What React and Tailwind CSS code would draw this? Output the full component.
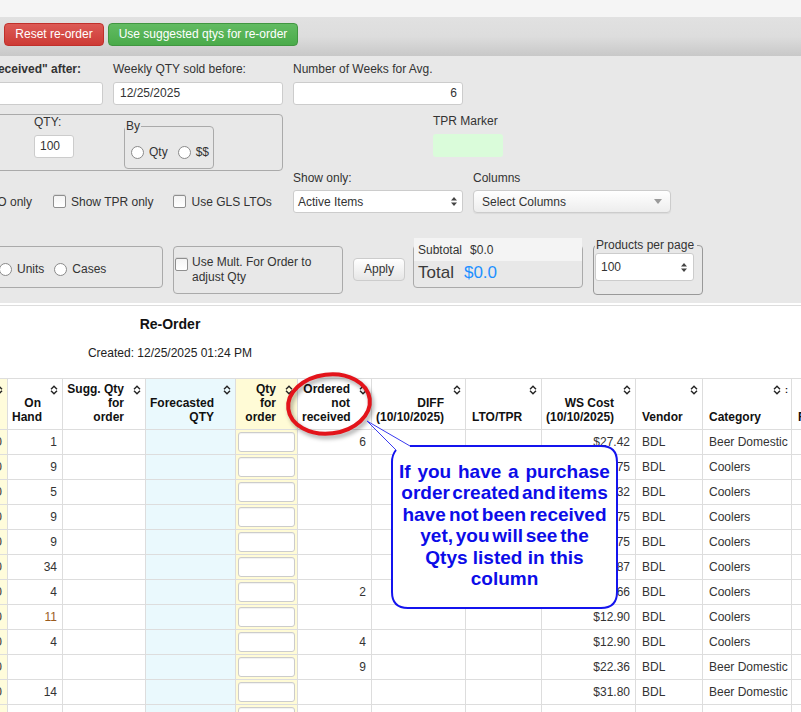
import React from "react";

const Sort = ({ right = 4 }) => (
  <svg
    width="8"
    height="10"
    viewBox="0 0 8 10"
    className={right === 4 ? "absolute right-[4px] top-[6px]" : "absolute right-[10px] top-[6px]"}
  >
    <path d="M1 4.2L4 1.2L7 4.2M1 5.8L4 8.8L7 5.8" fill="none" stroke="#222" strokeWidth="1.4" />
  </svg>
);

const Checkbox = () => (
  <span className="inline-block w-[13px] h-[13px] shrink-0 border border-[#8f8f8f] rounded-[2px] bg-linear-to-b from-[#f4f4f4] to-white shadow-[0_-1px_0_#d6d6d6]" />
);

const Radio = () => (
  <span className="inline-block w-[13px] h-[13px] shrink-0 border border-[#8a8a8a] rounded-full bg-white" />
);

const UpDown = () => (
  <svg width="6" height="9" viewBox="0 0 6 9">
    <path d="M0 3.5L3 0L6 3.5Z M0 5.5L3 9L6 5.5Z" fill="#444" />
  </svg>
);

const cols = [
  { w: "w-[57px]", label: [], align: "right", bg: "bg-[#fffcdb]" },
  { w: "w-[55px]", label: ["On", "Hand"], align: "right", bg: "" },
  { w: "w-[83px]", label: ["Sugg. Qty", "for", "order"], align: "right", bg: "" },
  { w: "w-[90px]", label: ["Forecasted", "QTY"], align: "right", bg: "bg-[#eaf9fd]" },
  { w: "w-[62px]", label: ["Qty", "for", "order"], align: "right", bg: "bg-[#fffbd6]" },
  { w: "w-[74px]", label: ["Ordered", "not", "received"], align: "right", bg: "" },
  { w: "w-[94px]", label: ["DIFF", "(10/10/2025)"], align: "right", bg: "" },
  { w: "w-[76px]", label: ["LTO/TPR"], align: "left", bg: "" },
  { w: "w-[94px]", label: ["WS Cost", "(10/10/2025)"], align: "right", bg: "" },
  { w: "w-[67px]", label: ["Vendor"], align: "left", bg: "" },
  { w: "w-[89px]", label: ["Category"], align: "left", bg: "" },
  { w: "w-[100px]", label: ["Format"], align: "left", bg: "", nosort: true },
];

const rows = [
  { oh: "1", ord: "6", ws: "$27.42", v: "BDL", cat: "Beer Domestic" },
  { oh: "9", ord: "", ws: "$12.75", v: "BDL", cat: "Coolers" },
  { oh: "5", ord: "", ws: "$13.32", v: "BDL", cat: "Coolers" },
  { oh: "9", ord: "", ws: "$12.75", v: "BDL", cat: "Coolers" },
  { oh: "9", ord: "", ws: "$12.75", v: "BDL", cat: "Coolers" },
  { oh: "34", ord: "", ws: "$13.87", v: "BDL", cat: "Coolers" },
  { oh: "4", ord: "2", ws: "$12.66", v: "BDL", cat: "Coolers" },
  { oh: "11", ord: "", ws: "$12.90", v: "BDL", cat: "Coolers", warn: true },
  { oh: "4", ord: "4", ws: "$12.90", v: "BDL", cat: "Coolers" },
  { oh: "", ord: "9", ws: "$22.36", v: "BDL", cat: "Beer Domestic" },
  { oh: "14", ord: "", ws: "$31.80", v: "BDL", cat: "Beer Domestic" },
  { oh: "", ord: "", ws: "", v: "", cat: "", empty: true },
];

export default function App() {
  return (
    <div className="relative w-[801px] h-[712px] overflow-hidden bg-white font-['Liberation_Sans',Arial,sans-serif] text-[12px] text-[#333]">
      {/* top band */}
      <div className="h-[17px] bg-[#f5f5f5]" />
      {/* toolbar */}
      <div className="h-[39px] bg-linear-to-b from-[#e1e1e1] via-[#dddddd] to-[#c8c8c8] flex items-start pt-[6px] pl-[4px] gap-[4px]">
        <button className="w-[100px] h-[23px] rounded-[4px] border border-[#c0302b] bg-linear-to-b from-[#dc5a55] to-[#cd3a35] text-white text-[12px] leading-[21px]">
          Reset re-order
        </button>
        <button className="w-[190px] h-[23px] rounded-[4px] border border-[#419641] bg-linear-to-b from-[#62bb62] to-[#4aab4a] text-white text-[12px] leading-[21px]">
          Use suggested qtys for re-order
        </button>
      </div>

      {/* filter panel */}
      <div className="h-[247px] bg-[#e8e8e8] pt-[6px]">
        {/* Row A */}
        <div className="flex gap-[10px] ml-[-67px]">
          <div className="w-[170px] shrink-0">
            <div className="flex justify-end pr-[22px] whitespace-nowrap leading-[14px] font-bold text-[#333]">
              <span>Show "Ordered not received" after:</span>
            </div>
            <div className="mt-[6px] h-[23px] bg-white border border-[#cccccc] rounded-[3px]" />
          </div>
          <div className="w-[170px] shrink-0">
            <div className="leading-[14px] whitespace-nowrap">Weekly QTY sold before:</div>
            <div className="mt-[6px] h-[23px] bg-white border border-[#cccccc] rounded-[3px] pl-[6px] leading-[21px]">
              12/25/2025
            </div>
          </div>
          <div className="w-[170px] shrink-0">
            <div className="leading-[14px] whitespace-nowrap">Number of Weeks for Avg.</div>
            <div className="mt-[6px] h-[23px] bg-white border border-[#cccccc] rounded-[3px] pr-[5px] text-right leading-[21px]">
              6
            </div>
          </div>
        </div>

        {/* Row B */}
        <div className="flex items-start mt-[9px] h-[57px]">
          <div className="ml-[-100px] w-[383px] h-[57px] shrink-0 border border-[#aaaaaa] rounded-[4px] flex items-start">
            <div className="ml-[133px] w-[40px]">
              <div className="leading-[14px]">QTY:</div>
              <div className="mt-[6px] h-[23px] bg-white border border-[#cccccc] rounded-[3px] pl-[5px] leading-[21px]">
                100
              </div>
            </div>
            <fieldset className="ml-[50px] mt-[4px] w-[90px] h-[50px] border border-[#aaaaaa] rounded-[4px]">
              <legend className="ml-[0px] px-[1px] leading-[14px]">By</legend>
              <div className="flex items-center pl-[6px] pt-[10px]">
                <Radio />
                <span className="ml-[5px]">Qty</span>
                <span className="ml-[10px] flex">
                  <Radio />
                </span>
                <span className="ml-[5px]">$$</span>
              </div>
            </fieldset>
          </div>
          <div className="ml-[150px] w-[70px] shrink-0">
            <div className="leading-[14px] whitespace-nowrap">TPR Marker</div>
            <div className="mt-[6px] h-[23px] bg-[#dafcda] rounded-[3px]" />
          </div>
        </div>

        {/* Row C */}
        <div className="flex items-start">
          <div className="w-[293px] shrink-0 pt-[24px] flex items-center h-[37px]">
            <div className="flex w-[32px] justify-end whitespace-nowrap shrink-0">
              <span>Show LTO only</span>
            </div>
            <span className="ml-[21px] flex">
              <Checkbox />
            </span>
            <span className="ml-[5px] whitespace-nowrap">Show TPR only</span>
            <span className="ml-[20px] flex">
              <Checkbox />
            </span>
            <span className="ml-[5px] whitespace-nowrap">Use GLS LTOs</span>
          </div>
          <div className="w-[170px] shrink-0">
            <div className="leading-[14px]">Show only:</div>
            <div className="mt-[5px] h-[23px] bg-white border border-[#cccccc] rounded-[3px] pl-[4px] pr-[5px] flex items-center justify-between">
              <span>Active Items</span>
              <UpDown />
            </div>
          </div>
          <div className="ml-[10px] w-[198px] shrink-0">
            <div className="leading-[14px]">Columns</div>
            <div className="mt-[5px] h-[23px] bg-linear-to-b from-white to-[#ededed] border border-[#cccccc] rounded-[4px] pl-[8px] pr-[8px] flex items-center justify-between shadow-[0_1px_1px_rgba(0,0,0,0.06)]">
              <span>Select Columns</span>
              <svg width="8" height="5" viewBox="0 0 8 5">
                <path d="M0 0L8 0L4 5Z" fill="#9a9a9a" />
              </svg>
            </div>
          </div>
        </div>

        {/* Row D */}
        <div className="flex items-start mt-[25px]">
          <div className="ml-[-60px] mt-[8px] w-[223px] h-[42px] shrink-0 border border-[#aaaaaa] rounded-[4px] flex items-center pl-[58px] pt-[4px]">
            <Radio />
            <span className="ml-[5px]">Units</span>
            <span className="ml-[10px] flex">
              <Radio />
            </span>
            <span className="ml-[5px]">Cases</span>
          </div>
          <div className="ml-[10px] mt-[8px] w-[170px] h-[48px] shrink-0 border border-[#aaaaaa] rounded-[4px] flex items-start pl-[1px] pt-[8px]">
            <span className="mt-[3px] flex">
              <Checkbox />
            </span>
            <span className="ml-[4px] leading-[15px]">
              Use Mult. For Order to
              <br />
              adjust Qty
            </span>
          </div>
          <button className="ml-[10px] mt-[20px] w-[52px] h-[23px] shrink-0 border border-[#cccccc] rounded-[4px] bg-linear-to-b from-white to-[#e6e6e6] text-[12px] text-[#333] leading-[21px]">
            Apply
          </button>
          <div className="ml-[8px] mt-[7px] w-[170px] h-[43px] shrink-0 border border-[#aaaaaa] rounded-[4px]">
            <div className="mt-[-8px] h-[23px] bg-[#f4f4f4] flex items-center pl-[4px] pt-[1px]">
              <span>Subtotal</span>
              <span className="ml-[8px]">$0.0</span>
            </div>
            <div className="h-[24px] flex items-center pl-[4px] text-[17px]">
              <span className="text-[#3a3a3a]">Total</span>
              <span className="ml-[10px] text-[#1e90ff]">$0.0</span>
            </div>
          </div>
          <fieldset className="ml-[10px] w-[110px] h-[57px] shrink-0 border border-[#999999] rounded-[4px] pl-[1px]">
            <legend className="px-[1px] pr-[3px] leading-[14px] whitespace-nowrap">Products per page</legend>
            <div className="mt-[1px] w-[99px] h-[28px] bg-white border border-[#cccccc] rounded-[3px] pl-[5px] pr-[6px] flex items-center justify-between">
              <span>100</span>
              <UpDown />
            </div>
          </fieldset>
        </div>
      </div>
      <div className="h-[2px] bg-white" />
      <div className="h-px bg-[#dddddd]" />

      {/* Title */}
      <div className="w-[340px] text-center">
        <div className="mt-[10px] text-[14px] leading-[16px] font-bold text-[#111]">Re-Order</div>
        <div className="mt-[14px] leading-[14px] text-[#222]">Created: 12/25/2025 01:24 PM</div>
      </div>

      {/* Table */}
      <table className="mt-[18px] ml-[-50px] w-[941px] table-fixed border-collapse">
        <colgroup>
          {cols.map((c, i) => (
            <col key={i} className={c.w} />
          ))}
        </colgroup>
        <thead>
          <tr>
            {cols.map((c, i) => (
              <th
                key={i}
                className={
                  "relative h-[51px] align-bottom pb-[5px] border border-[#dddddd] font-bold leading-[14px] text-[#111] " +
                  (c.align === "right" ? "text-right pr-[21px] pl-[4px] " : "text-left pl-[6px] pr-[4px] ") +
                  c.bg
                }
              >
                {!c.nosort && <Sort right={i === 10 ? 10 : 4} />}
                {i === 10 && (
                  <span className="absolute right-[3px] top-[7px] text-[9px] leading-[9px] font-bold">:</span>
                )}
                {c.label.map((l, j) => (
                  <div key={j} className="whitespace-nowrap">
                    {l}
                  </div>
                ))}
              </th>
            ))}
          </tr>
        </thead>
        <tbody>
          {rows.map((r, i) => (
            <tr key={i}>
              <td className="h-[25px] border border-[#dddddd] bg-[#fffcdb] text-right pr-[5px]">0</td>
              <td className={"border border-[#dddddd] text-right pr-[5px] " + (r.warn ? "text-[#9a5b1e]" : "")}>{r.oh}</td>
              <td className="border border-[#dddddd]" />
              <td className="border border-[#dddddd] bg-[#eaf9fd]" />
              <td className="border border-[#dddddd] bg-[#fffbd6] px-[2px]">
                <div className="h-[20px] bg-white border border-[#cccccc] rounded-[3px] shadow-[inset_0_1px_1px_rgba(0,0,0,0.06)]" />
              </td>
              <td className="border border-[#dddddd] text-right pr-[5px]">{r.ord}</td>
              <td className="border border-[#dddddd]" />
              <td className="border border-[#dddddd]" />
              <td className="border border-[#dddddd] text-right pr-[5px]">{r.ws}</td>
              <td className="border border-[#dddddd] pl-[6px]">{r.v}</td>
              <td className="border border-[#dddddd] pl-[6px] whitespace-nowrap">{r.cat}</td>
              <td className="border border-[#dddddd]" />
            </tr>
          ))}
        </tbody>
      </table>

      {/* red ellipse annotation */}
      <svg
        width="100"
        height="76"
        viewBox="0 0 100 76"
        className="absolute left-[279px] top-[366px] drop-shadow-[2px_3px_2px_rgba(0,0,0,0.35)]"
      >
        <ellipse cx="50" cy="38" rx="41" ry="29.5" fill="none" stroke="#e3141b" strokeWidth="4" transform="rotate(-7 50 38)" />
      </svg>

      {/* callout */}
      <svg width="262" height="200" viewBox="0 0 262 200" className="absolute left-[360px] top-[414px]">
        <path
          d="M50 32 H241 Q257 32 257 48 V178 Q257 194 241 194 H48 Q32 194 32 178 V48 Q32 41 36 36 L7 7 Z"
          fill="white"
        />
        <path
          d="M50 32 H241 Q257 32 257 48 V178 Q257 194 241 194 H48 Q32 194 32 178 V48 Q32 41 36 36"
          fill="none"
          stroke="#1414ee"
          strokeWidth="2"
        />
        <path d="M36 36 L7 7 L50 32" fill="none" stroke="#3a3af0" strokeWidth="1" />
      </svg>
      <div className="absolute left-[392px] top-[444px] w-[225px] h-[162px] flex items-center justify-center text-center">
        <div className="text-[19px] leading-[21.5px] font-bold text-[#0c0ce8]">
          <div className="whitespace-nowrap [word-spacing:1.5px]">If you have a purchase</div>
          <div className="whitespace-nowrap [word-spacing:-3px]">order created and items</div>
          <div className="whitespace-nowrap [word-spacing:-2px]">have not been received</div>
          <div className="whitespace-nowrap [word-spacing:-2.5px]">yet, you will see the</div>
          <div className="whitespace-nowrap">Qtys listed in this</div>
          <div className="whitespace-nowrap">column</div>
        </div>
      </div>
    </div>
  );
}
